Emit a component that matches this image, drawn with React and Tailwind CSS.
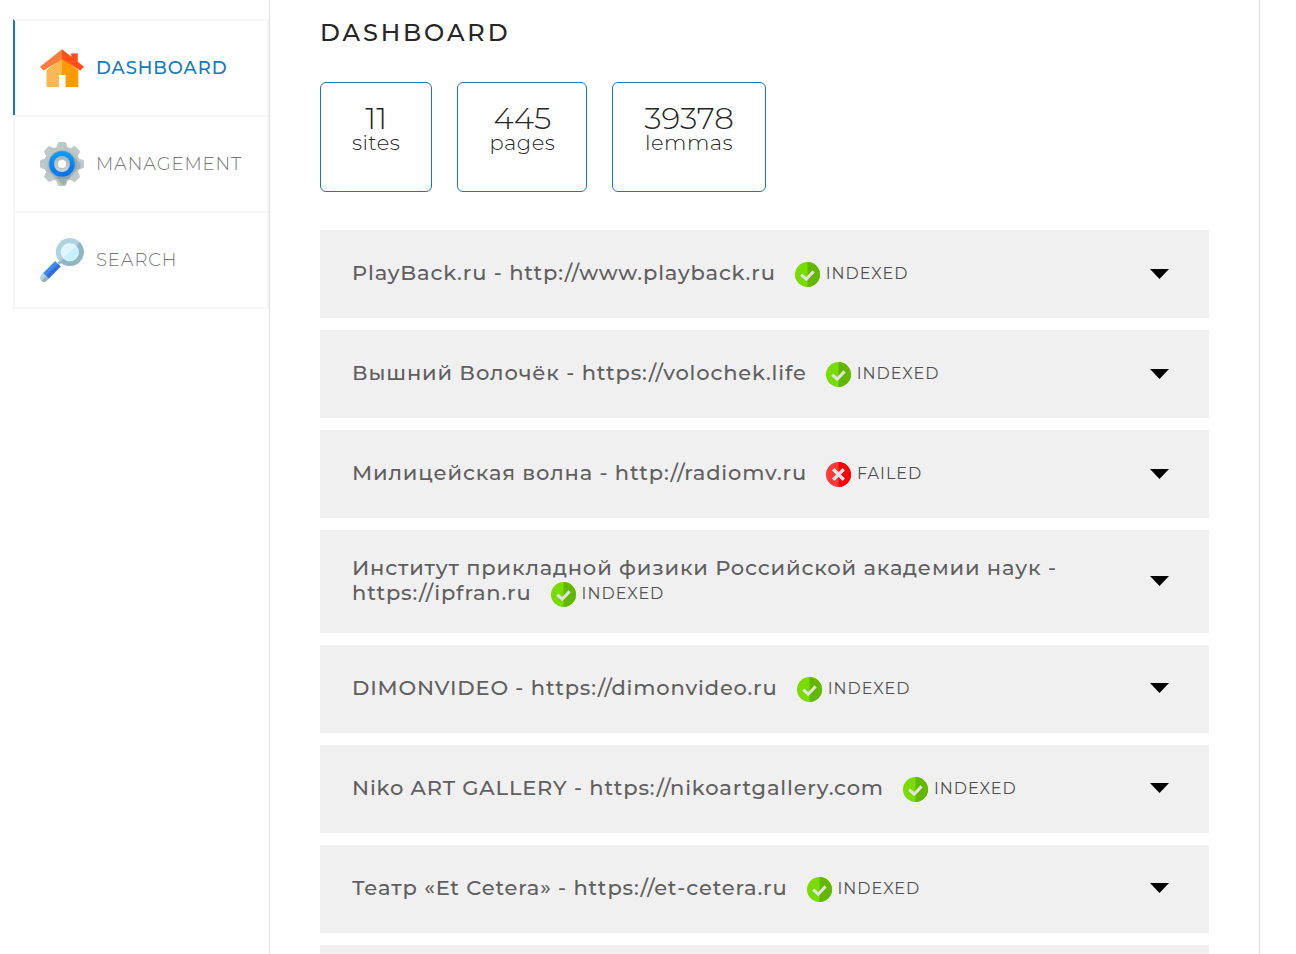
import React from "react";

function HomeIcon() {
  return (
    <svg viewBox="0 0 44 44" className="size-11 shrink-0" aria-hidden="true">
      <path d="M31.2 7.4h6.6v10h-6.6z" fill="#ff4f19" />
      <path d="M22 12 6.5 24v17H19V29h3z" fill="#ffb74f" />
      <path d="M22 12l16.3 12v17H25.6V29H22z" fill="#ff9a00" />
      <path d="M22 3.2v10L3.6 24.6 0 20.8z" fill="#ff7d3c" />
      <path d="M22 3.2v10l18.4 11.4 3.6-3.8z" fill="#ff4f19" />
    </svg>
  );
}

const teeth = [0, 45, 90, 135, 180, 225, 270, 315];

function GearIcon() {
  return (
    <svg viewBox="0 0 44 44" className="size-11 shrink-0" aria-hidden="true">
      <defs>
        <linearGradient id="gear-metal" gradientUnits="userSpaceOnUse" x1="10" y1="2" x2="32" y2="44">
          <stop offset="0" stopColor="#c3cfce" />
          <stop offset="1" stopColor="#98a9a9" />
        </linearGradient>
        <linearGradient id="gear-ring" x1="0" y1="0" x2="0" y2="1">
          <stop offset="0" stopColor="#0b9dfb" />
          <stop offset="1" stopColor="#0876f2" />
        </linearGradient>
        <linearGradient id="gear-hub" x1="0" y1="0" x2="0" y2="1">
          <stop offset="0" stopColor="#a6b3b3" />
          <stop offset="1" stopColor="#cbd4d4" />
        </linearGradient>
      </defs>
      <g fill="url(#gear-metal)">
        <circle cx="22" cy="22" r="17.6" />
        {teeth.map((angle) => (
          <path
            key={angle}
            d="M14.5 7Q17.2 5.2 17.7 1.4Q17.9 0 19.2 0h5.6Q26.1 0 26.3 1.4Q26.8 5.2 29.5 7z"
            transform={`rotate(${angle} 22 22)`}
          />
        ))}
      </g>
      <path d="M31 13l9.5 8.2v5.3l-5 1-5-3z" fill="#83979a" opacity=".4" />
      <path d="M14 31l8 12h3l2-5 4-4-2-3z" fill="#839597" opacity=".5" />
      <circle cx="22" cy="22" r="13.6" fill="#93a0a0" />
      <circle cx="22" cy="22" r="12.8" fill="url(#gear-ring)" />
      <path d="M27.5 16 34 24a12.8 12.8 0 0 1-8 10l-9-6z" fill="#065fd8" opacity=".25" />
      <circle cx="22" cy="22" r="8" fill="url(#gear-hub)" />
      <circle cx="22" cy="22" r="5.2" fill="#bcc5c4" />
      <circle cx="22" cy="22" r="4" fill="#fff" />
    </svg>
  );
}

function SearchIcon() {
  return (
    <svg viewBox="0 0 44 44" className="size-11 shrink-0" aria-hidden="true">
      <path d="M17.5 24.5l2.8-2.8 2 2-2.8 2.8z" fill="#8fb4bf" />
      <path d="M5 33.5 1.2 37.2a4.2 4.2 0 0 0 0 5.6L8 36.3z" fill="#aed5dd" />
      <path d="M10.3 39.2 7 42.4a4.2 4.2 0 0 1-5.8.4L7.5 36.4z" fill="#8fb4bf" />
      <path d="M15.2 23 3.2 35l3 3L18 26z" fill="#3b8af5" />
      <path d="M20.8 28.4 9 40.4 6 37.6 18 25.6z" fill="#376cdc" />
      <circle cx="29.8" cy="14.1" r="14" fill="#aed5df" />
      <path d="M39.7 4.2a14 14 0 0 1-19.8 19.8z" fill="#91b6c1" />
      <circle cx="29.8" cy="14.1" r="9.1" fill="#e0f7ff" />
      <path d="M36.2 7.7a9.1 9.1 0 0 1-12.8 12.8z" fill="#c5f0ff" />
    </svg>
  );
}

function StatusIcon({ ok }) {
  return ok ? (
    <svg viewBox="0 0 25 25" className="size-[25px]" aria-hidden="true">
      <circle cx="12.5" cy="12.5" r="12.5" fill="#78dc00" />
      <path d="M12.5 0a12.5 12.5 0 0 1 0 25z" fill="#64b700" />
      <path d="M6.2 12.6 11.2 17.2 18.6 9.4" fill="none" stroke="#e2e2e2" strokeWidth="3" />
    </svg>
  ) : (
    <svg viewBox="0 0 25 25" className="size-[25px]" aria-hidden="true">
      <circle cx="12.5" cy="12.5" r="12.5" fill="#ff3838" />
      <path d="M12.5 0a12.5 12.5 0 0 1 0 25z" fill="#fc0005" />
      <path d="M7.2 7.2 17.8 17.8M17.8 7.2 7.2 17.8" stroke="#e4e4e4" strokeWidth="3.4" />
    </svg>
  );
}

const navItems = [
  { label: "DASHBOARD", Icon: HomeIcon, active: true },
  { label: "MANAGEMENT", Icon: GearIcon },
  { label: "SEARCH", Icon: SearchIcon },
];

const stats = [
  { value: "11", label: "sites" },
  { value: "445", label: "pages" },
  { value: "39378", label: "lemmas" },
];

const sites = [
  { name: "PlayBack.ru", url: "http://www.playback.ru", status: "INDEXED" },
  { name: "Вышний Волочёк", url: "https://volochek.life", status: "INDEXED" },
  { name: "Милицейская волна", url: "http://radiomv.ru", status: "FAILED" },
  {
    name: "Институт прикладной физики Российской академии наук",
    url: "https://ipfran.ru",
    status: "INDEXED",
  },
  { name: "DIMONVIDEO", url: "https://dimonvideo.ru", status: "INDEXED" },
  { name: "Niko ART GALLERY", url: "https://nikoartgallery.com", status: "INDEXED" },
  { name: "Театр «Et Cetera»", url: "https://et-cetera.ru", status: "INDEXED" },
];

function SiteRow({ name, url, status }) {
  return (
    <button
      type="button"
      aria-expanded="false"
      className="flex min-h-[88px] w-full shrink-0 items-center justify-between bg-[#f0f0f0] pt-[25px] pr-10 pb-[26px] pl-8 text-left text-[#5f5f5f]"
    >
      <span className="max-w-[740px] text-[21px] leading-[25px] font-medium tracking-[0.04em]">
        {name} - {url}
        <span className="ml-[19px] inline-flex h-[25px] items-center gap-[6px] align-middle text-base font-normal tracking-[1px] text-[#505050]">
          <StatusIcon ok={status === "INDEXED"} />
          {status}
        </span>
      </span>
      <svg viewBox="0 0 20 10" className="h-[10px] w-5 shrink-0" aria-hidden="true">
        <path d="M1 0h19L10.5 10z" fill="#000" />
      </svg>
    </button>
  );
}

export default function App() {
  return (
    <div className="flex h-screen overflow-hidden bg-white font-['Montserrat','Inter',sans-serif] text-[#262626]">
      <aside className="w-[270px] shrink-0 border-r border-[#dfdfdf] pt-[19px] pl-[13px]">
        <nav className="flex flex-col border-b-2 border-[#f7f7f7]">
          {navItems.map(({ label, Icon, active }) => (
            <a
              key={label}
              href={`#${label.toLowerCase()}`}
              className={`flex h-24 items-center gap-3 border-2 border-b-0 border-[#f7f7f7] pl-[25px] text-lg tracking-wider ${
                active ? "border-l-[#157bb7] font-medium text-[#157bb7]" : "font-light text-[#767676]"
              }`}
            >
              <Icon />
              {label}
            </a>
          ))}
        </nav>
      </aside>

      <main className="mr-9 flex min-w-0 flex-1 flex-col border-r border-[#dfdfdf] px-[50px] pt-[17px]">
        <h1 className="text-2xl leading-8 font-medium tracking-[0.12em]">DASHBOARD</h1>

        <section className="mt-[33px] flex shrink-0 gap-[25px]">
          {stats.map(({ value, label }) => (
            <div
              key={label}
              className="flex h-[110px] flex-col items-center rounded-md border border-[#157bb7] px-[31px] pt-5"
            >
              <strong className="text-[31px] leading-[30px] font-light">{value}</strong>
              <span className="text-[21px] leading-5 font-light tracking-wide">{label}</span>
            </div>
          ))}
        </section>

        <section className="mt-[38px] flex flex-col gap-3">
          {sites.map((site) => (
            <SiteRow key={site.url} {...site} />
          ))}
          <div className="min-h-[88px] shrink-0 bg-[#f0f0f0]" />
        </section>
      </main>
    </div>
  );
}
